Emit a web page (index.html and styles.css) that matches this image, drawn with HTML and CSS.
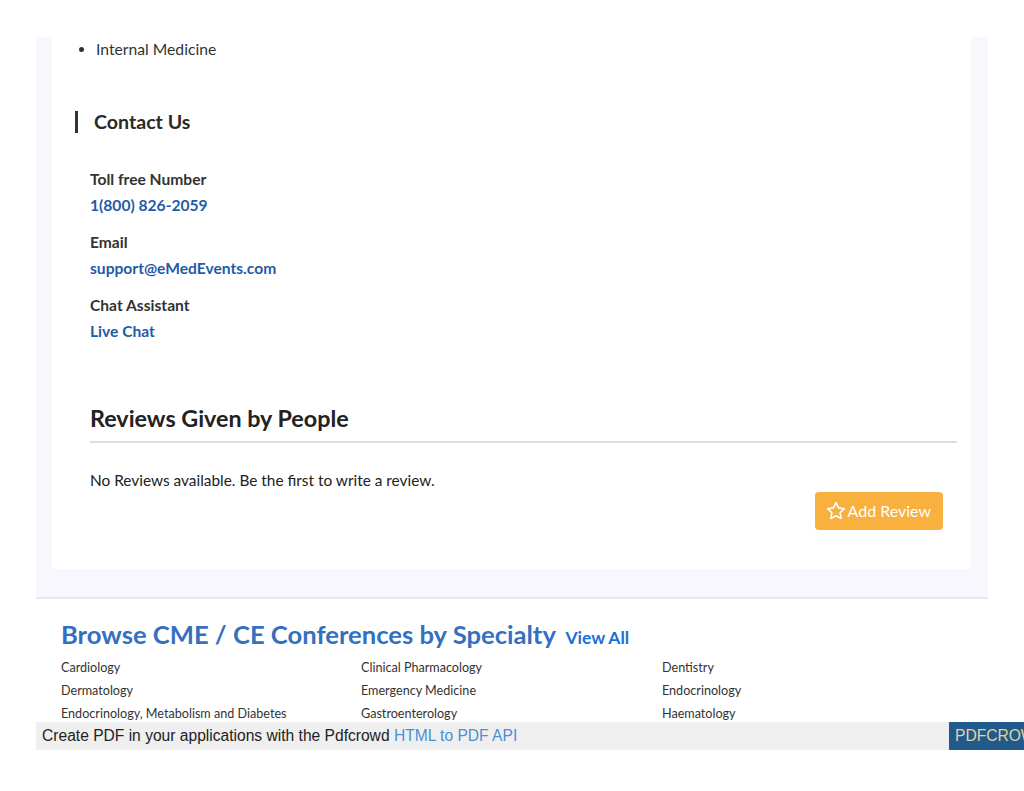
FILE: index.html
```html
<!DOCTYPE html>
<html>
<head>
<meta charset="utf-8">
<link rel="stylesheet" href="styles.css">
</head>
<body>
<div class="page">
  <div class="band">
    <div class="card">
      <ul class="spec-list">
        <li>Internal Medicine</li>
      </ul>
      <h2 class="section-title">Contact Us</h2>
      <div class="contact">
        <div class="contact-group">
          <div class="contact-label">Toll free Number</div>
          <a class="contact-link" href="#">1(800) 826-2059</a>
        </div>
        <div class="contact-group">
          <div class="contact-label">Email</div>
          <a class="contact-link" href="#">support@eMedEvents.com</a>
        </div>
        <div class="contact-group">
          <div class="contact-label">Chat Assistant</div>
          <a class="contact-link" href="#">Live Chat</a>
        </div>
      </div>
      <div class="reviews">
        <h2 class="reviews-title">Reviews Given by People</h2>
        <p class="reviews-empty">No Reviews available. Be the first to write a review.</p>
        <div class="reviews-actions">
          <button class="btn-review" type="button">
            <svg class="star" viewBox="0 0 24 24" width="22" height="22" aria-hidden="true"><path d="M12 2.8l2.8 5.8 6.3.9-4.6 4.4 1.1 6.3L12 17.2l-5.6 3 1.1-6.3-4.6-4.4 6.3-.9z" fill="none" stroke="#fff" stroke-width="1.7" stroke-linejoin="round"/></svg>
            <span>Add Review</span>
          </button>
        </div>
      </div>
    </div>
  </div>
  <div class="browse">
    <h2 class="browse-title">Browse CME / CE Conferences by Specialty <a class="view-all" href="#">View All</a></h2>
    <div class="browse-grid">
      <a href="#">Cardiology</a>
      <a href="#">Clinical Pharmacology</a>
      <a href="#">Dentistry</a>
      <a href="#">Dermatology</a>
      <a href="#">Emergency Medicine</a>
      <a href="#">Endocrinology</a>
      <a href="#">Endocrinology, Metabolism and Diabetes</a>
      <a href="#">Gastroenterology</a>
      <a href="#">Haematology</a>
    </div>
  </div>
</div>
<div class="pdf-bar">
  <div class="pdf-text">Create PDF in your applications with the Pdfcrowd <a href="#">HTML to PDF API</a></div>
  <div class="pdf-btn">PDFCROWD</div>
</div>
</body>
</html>
```

FILE: styles.css
```css
html, body {
  margin: 0;
  padding: 0;
  background: #fff;
  overflow: hidden;
}
body {
  font-family: Lato, "Open Sans", sans-serif;
  color: #333;
}
a { text-decoration: none; }

.page {
  margin-left: 36px;
  width: 952px;
  padding-top: 37px;
}

.band {
  background: #f7f7fd;
  padding: 0 17px 28px 16px;
  border-bottom: 2px solid #e7e7ec;
}

.card {
  background: #fff;
  border-radius: 0 0 4px 4px;
  padding: 0 14px 39px 0;
}

.spec-list {
  margin: 0;
  padding-left: 44px;
  font-size: 15.7px;
  line-height: 24px;
  color: #333;
}

.section-title {
  margin: 50px 0 0 23px;
  border-left: 3px solid #333;
  padding-left: 16px;
  font-size: 19.6px;
  font-weight: 700;
  line-height: 22px;
  color: #2a2a2a;
}

.contact {
  margin-top: 33px;
  padding-left: 38px;
}
.contact-group {
  margin-bottom: 11px;
}
.contact-label {
  font-size: 15.6px;
  font-weight: 700;
  line-height: 26px;
  color: #333;
}
.contact-link {
  display: block;
  font-size: 15.6px;
  font-weight: 700;
  line-height: 26px;
  color: #1f5ba6;
}

.reviews {
  margin-top: 59px;
  padding-left: 38px;
}
.reviews-title {
  margin: 0;
  font-size: 23.3px;
  font-weight: 700;
  line-height: 30px;
  color: #222;
  padding-bottom: 8px;
  border-bottom: 2px solid #dcdcdc;
}
.reviews-empty {
  margin: 26px 0 0;
  font-size: 15.4px;
  line-height: 22px;
  color: #222;
}
.reviews-actions {
  display: flex;
  justify-content: flex-end;
  margin-top: 1px;
  padding-right: 14px;
}
.btn-review {
  display: flex;
  align-items: center;
  gap: 1px;
  height: 38px;
  padding: 0 12px 0 10px;
  background: #f8b03f;
  border: 0;
  border-radius: 4px;
  color: #fff;
  font-family: Lato, sans-serif;
  font-size: 16px;
  line-height: 1;
}
.star { display: block; }

.browse {
  height: 123px;
  overflow: hidden;
  padding-left: 25px;
}
.browse-title {
  margin: 19px 0 0;
  font-size: 25.6px;
  font-weight: 700;
  line-height: 32px;
  color: #3470c0;
}
.view-all {
  font-size: 17.4px;
  color: #1b6fd6;
  margin-left: 4px;
}
.browse-grid {
  margin-top: 2px;
  display: grid;
  grid-template-columns: 300px 301px 300px;
}
.browse-grid a {
  font-size: 12.6px;
  line-height: 23px;
  color: #333;
}

.pdf-bar {
  margin-left: 36px;
  width: 1030px;
  height: 28px;
  display: flex;
  align-items: center;
  background: #efefef;
  font-family: "Liberation Sans", Arial, sans-serif;
  font-size: 15.6px;
}
.pdf-text {
  width: 907px;
  flex-shrink: 0;
  padding-left: 6px;
  color: #222;
}
.pdf-text a { color: #4a8fd4; }
.pdf-btn {
  flex-shrink: 0;
  height: 28px;
  line-height: 28px;
  padding-left: 6px;
  width: 110px;
  background: #205a8b;
  color: #e2d3a3;
}
```
